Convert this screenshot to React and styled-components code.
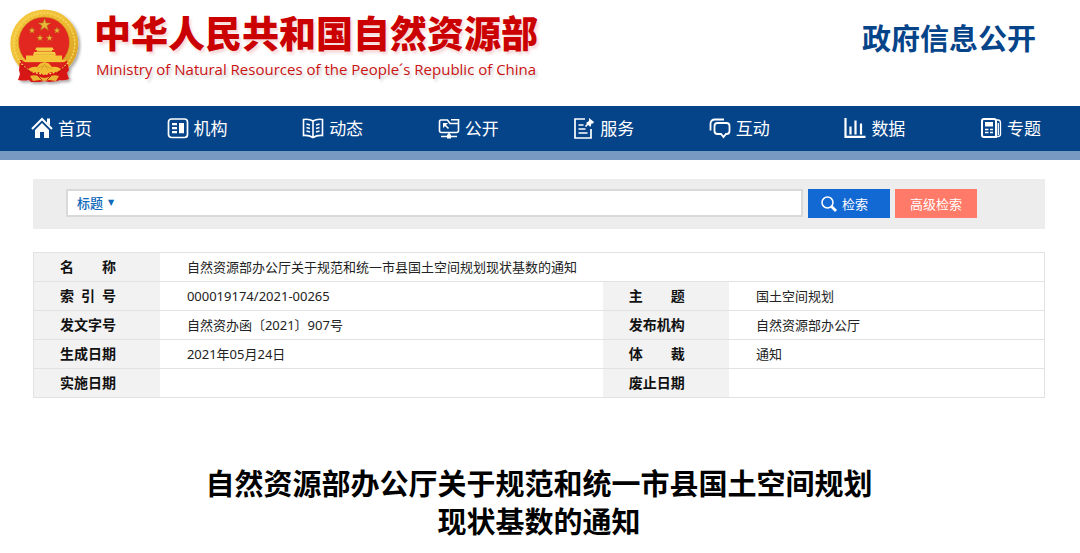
import React from 'react';
import styled, { createGlobalStyle } from 'styled-components';

const GlobalStyle = createGlobalStyle`
    *{
        box-sizing: border-box;
    }
    body{
        margin: 0;
        background: #fff;
        color: #222;
        font-family: "Noto Sans", "Noto Sans CJK SC", sans-serif;
        font-size: 13px;
    }
`;

const Header = styled.header`
    display: flex;
    justify-content: space-between;
    align-items: flex-start;
    height: 106px;
    padding: 8px 44px 0 8px;
`;

const Brand = styled.a`
    display: flex;
    text-decoration: none;

    svg{
        flex: none;
        margin-right: 12px;
    }
`;

const BrandName = styled.h1`
    margin: 0;
    color: #cb0000;
    font-family: "Noto Sans CJK SC", sans-serif;
    font-size: 37px;
    font-weight: 900;
    line-height: 48px;
    white-space: nowrap;
    text-shadow: 2px 3px 3px rgba(200, 0, 0, 0.15);
`;

const BrandSub = styled.p`
    margin: 3px 0 0 2px;
    color: #cb1212;
    font-family: "Open Sans", sans-serif;
    font-size: 15px;
    line-height: 20px;
    white-space: nowrap;
    text-shadow: 2px 3px 3px rgba(0, 0, 0, 0.2);
`;

const Section = styled.h2`
    margin: 9px 0 0;
    color: #06448a;
    font-family: "Noto Sans CJK SC", sans-serif;
    font-size: 29px;
    font-weight: 700;
    line-height: 40px;
    white-space: nowrap;
`;

const Nav = styled.nav`
    display: flex;
    justify-content: space-between;
    align-items: center;
    height: 54px;
    padding: 0 39px 2px 31px;
    background: #06448a;
    border-bottom: 9px solid #7799c2;
`;

const NavLink = styled.a`
    display: flex;
    align-items: center;
    gap: 5px;
    color: #fff;
    font-family: "Noto Sans CJK SC", sans-serif;
    font-size: 17px;
    line-height: 24px;
    text-decoration: none;
`;

const Main = styled.main`
    padding: 19px 35px 0 33px;
`;

const SearchBar = styled.form`
    display: flex;
    gap: 5px;
    padding: 10px 68px 11px 33px;
    background: #ededed;
`;

const SearchField = styled.div`
    display: flex;
    flex: 1;
    align-items: center;
    height: 28px;
    padding-left: 9px;
    background: #fff;
    border: 2px solid #d9d9d9;
`;

const Picker = styled.label`
    display: flex;
    align-items: center;
    gap: 4px;
    color: #1068ba;

    span{
        font-family: "DejaVu Sans", sans-serif;
        font-size: 8px;
        line-height: 12px;
    }
`;

const FieldSelect = styled.select`
    appearance: none;
    padding: 0;
    border: 0;
    background: transparent;
    color: inherit;
    font-family: "Noto Sans CJK SC", sans-serif;
    font-size: 13px;
    font-weight: 500;
    line-height: 20px;
`;

const Keyword = styled.input`
    flex: 1;
    min-width: 0;
    height: 22px;
    margin-left: 8px;
    border: 0;
    outline: 0;
    font: inherit;
`;

const Button = styled.button`
    display: flex;
    align-items: center;
    justify-content: center;
    gap: 5px;
    width: 82px;
    height: 29px;
    padding: 0;
    border: 0;
    background: ${({ $color }) => $color};
    color: #fff;
    font-family: "Noto Sans CJK SC", sans-serif;
    font-size: 13px;
`;

const SearchButton = styled(Button)`
    justify-content: flex-start;
    padding-left: 13px;
`;

const InfoTable = styled.table`
    width: 100%;
    margin-top: 23px;
    border: 1px solid #e2e2e2;
    border-collapse: collapse;
    table-layout: fixed;

    tr{
        height: 29px;
        border-bottom: 1px solid #e2e2e2;
    }
`;

const Label = styled.th`
    padding: 0 0 0 26px;
    background: #f2f2f2;
    color: #111;
    font-size: 14px;
    font-weight: 700;
    line-height: 20px;
    text-align: left;
    white-space: pre;
`;

const Value = styled.td`
    padding: 0 0 0 27px;
    line-height: 20px;
`;

const Title = styled.h2`
    max-width: 680px;
    margin: 65px auto 0;
    color: #000;
    font-family: "Noto Sans CJK SC", sans-serif;
    font-size: 29px;
    font-weight: 700;
    line-height: 38px;
    text-align: center;
`;

const Star = ({ x, y, r }) => (
    <path
        transform={`translate(${x} ${y}) scale(${r})`}
        d="M0-1 .24-.31 .95-.31 .38 .12 .59 .81 0 .4-.59 .81-.38 .12-.95-.31-.24-.31Z"
        fill="#e8b838"
        stroke="#a8741c"
        strokeWidth=".08"
    />
);

const Emblem = () => (
    <svg width="74" height="80" viewBox="0 0 74 80" aria-hidden="true">
        <defs>
            <linearGradient id="gold" x1="0" y1="0" x2="1" y2="1">
                <stop offset="0" stopColor="#f7cc43" />
                <stop offset=".5" stopColor="#edbd33" />
                <stop offset="1" stopColor="#d79a1e" />
            </linearGradient>
            <filter id="shade" x="-20%" y="-20%" width="150%" height="150%">
                <feDropShadow dx="2" dy="2" stdDeviation="1.5" floodOpacity=".35" />
            </filter>
        </defs>
        <g filter="url(#shade)">
            <circle cx="36.3" cy="35.5" r="34" fill="url(#gold)" />
            <path d="M12 52 11 62l1 4-2 6q6 1 11 0l2 2 9 0 4-1 5 1 9-1 1-1q5 1 10-1l-2-6 2-3-2-10Z" fill="#d71818" />
        </g>
        <circle cx="36.3" cy="35.5" r="30.500" fill="none" stroke="#f7d65c" strokeWidth="1.500" strokeDasharray="2 1.400" />
        <circle cx="36.3" cy="35.5" r="28" fill="none" stroke="#dba62a" strokeWidth=".8" strokeDasharray="1.500 3" />
        <circle cx="36" cy="34.500" r="25.600" fill="#e12720" stroke="#d49b22" strokeWidth=".8" />
        <Star x={36.500} y={17} r={6.500} />
        <Star x={24} y={22.500} r={3.400} />
        <Star x={49} y={22.500} r={3.400} />
        <Star x={32} y={30} r={3.400} />
        <Star x={41.500} y={30} r={3.400} />
        <path d="M28.500 39.500h16l1.500 2.500H27ZM29 42h15v1.500H29ZM26 44h21l1 3.500h-1V50H26v-2.500h-1Z" fill="#f6cc45" />
        <path d="M28 43.300h17M27 46.500h19" stroke="#dd9a28" strokeWidth=".5" />
        <path d="M18 47.500h36V52H18ZM14 52h45l-3 2.200H17Z" fill="#f4c53a" />
        <path d="M14 54.500h45l-8 9H22Z" fill="#dc201b" />
        <path d="M20 61q5-3 9-2l3-3.500 4.500-1.500 4.500 1.500 3 3.500q5-1 9 2-4 4-10 3l-6.500 3-6.500-3q-6 1-10-3Z" fill="#f2bd32" />
        <path d="M29 61q7-6 15 0M33 62l3.500-6 3.500 6" fill="none" stroke="#d89c28" strokeWidth=".8" />
        <path d="M14 57 24 66M59 57 49 66" stroke="#b30d12" />
        <path d="M22 68q6-2 10 1l4.500 1 4.500-1q4-3 10-1l-3 5-7-1-4.500 1-4.500-1-7 1Z" fill="#e8b431" />
        <path d="M30 68l4 4M43 68l-4 4" stroke="#cc2418" />
    </svg>
);

const icons = {
    home: (
        <>
            <path d="M1 12 11 2l10 10" fill="none" stroke="#fff" strokeWidth="2" />
            <path d="M16 1.500h3v7l-3-3Z" fill="#fff" />
            <path d="M4 13 11 6l7 7v8h-5v-6H9v6H4Z" fill="#fff" />
        </>
    ),
    organ: (
        <>
            <rect x="1.500" y="2" width="19" height="18.500" rx="3" fill="none" stroke="#fff" strokeWidth="1.700" />
            <path d="M5 6h5v2.200H5ZM5 10h5v2.200H5ZM5 14h5v2.200H5ZM12 6h5v10.200h-5Z" fill="#fff" />
        </>
    ),
    book: (
        <g fill="none" stroke="#fff" strokeWidth="1.600">
            <path d="M11 4Q7 1.500 1.500 2.500v16Q7 18 11 20.500 15 18 20.500 18.500v-16Q15 1.500 11 4Zm0 0v16" />
            <path d="m4.500 7 3.500 1M4.500 10.500l3.500 1M4.500 14l3.500 1M17.500 7 14 8M17.500 10.500l-3.500 1M17.500 14 14 15" />
        </g>
    ),
    open: (
        <g fill="none" stroke="#fff" strokeWidth="1.600">
            <path d="M9.500 3H3Q1.500 3 1.500 5v8.500q0 2 2 2h15q2 0 2-2V6.500H12L9.500 3Z" />
            <path d="M13 2.800h7.500V6M10.500 11.500l-4-4M11 15.500v3M3 19.500h16" />
            <path d="M5 6h5l-5 5ZM9 17.500h4V21.500H9Z" fill="#fff" stroke="none" />
        </g>
    ),
    service: (
        <g fill="none" stroke="#fff" strokeWidth="1.700">
            <path d="M12 2H2v19h16V12" />
            <path d="M5.500 8h5M5.500 12h7M5.500 16h9" />
            <path d="m12.500 9.500 4-4" />
            <path d="m16 1 5 4-1 1.500-1.500 0-1 3.500-4.500-4L16 4Z" fill="#fff" stroke="none" />
        </g>
    ),
    chat: (
        <g fill="none" stroke="#fff" strokeWidth="1.800">
            <path d="M1.500 13.500V7Q1.500 2.500 6 2.500h9" />
            <path d="M8.500 6h9q3 0 3 3v5q0 3-3 3H17L14.500 20 12 17H8.500q-3 0-3-3V9q0-3 3-3Z" />
        </g>
    ),
    data: (
        <path d="M1.500 1v18.800H21.500M6.500 9.500v8M11.500 3.500v14M17 6.500v11" fill="none" stroke="#fff" strokeWidth="2.200" />
    ),
    news: (
        <g fill="none" stroke="#fff" strokeWidth="2">
            <path d="M4 2h10q2 0 2 2v16H4q-2 0-2-2V4q0-2 2-2Z" />
            <path d="M16 3h2q2.500 0 2.500 3v11q0 2.500-2.500 2.500h-2M18.300 6v12" strokeWidth="1.300" />
            <path d="M5 5h8v4.500H5Z" fill="#fff" stroke="none" />
            <path d="M5 12.500h3.500M10 12.500h3M5 15.500h3.500M10 15.500h3" strokeWidth="1.300" />
        </g>
    ),
};

const menu = [
    ['home', '首页'],
    ['organ', '机构'],
    ['book', '动态'],
    ['open', '公开'],
    ['service', '服务'],
    ['chat', '互动'],
    ['data', '数据'],
    ['news', '专题'],
];

const rows = [
    ['索\u2002引\u2002号', '000019174/2021-00265', '主　　题', '国土空间规划'],
    ['发文字号', '自然资办函〔2021〕907号', '发布机构', '自然资源部办公厅'],
    ['生成日期', '2021年05月24日', '体　　裁', '通知'],
    ['实施日期', '', '废止日期', ''],
];

const App = () => {
    return (
        <>
            <GlobalStyle />
            <Header>
                <Brand href="#">
                    <Emblem />
                    <div>
                        <BrandName>中华人民共和国自然资源部</BrandName>
                        <BrandSub>Ministry of Natural Resources of the People´s Republic of China</BrandSub>
                    </div>
                </Brand>
                <Section>政府信息公开</Section>
            </Header>
            <Nav>
                {menu.map(([icon, text]) => (
                    <NavLink href="#" key={icon}>
                        <svg width="22" height="22" viewBox="0 0 22 22" aria-hidden="true">{icons[icon]}</svg>
                        {text}
                    </NavLink>
                ))}
            </Nav>
            <Main>
                <SearchBar onSubmit={(e) => e.preventDefault()}>
                    <SearchField>
                        <Picker>
                            <FieldSelect aria-label="标题">
                                <option>标题</option>
                            </FieldSelect>
                            <span aria-hidden="true">▼</span>
                        </Picker>
                        <Keyword type="text" aria-label="检索" />
                    </SearchField>
                    <SearchButton type="submit" $color="#1369d3">
                        <svg width="16" height="16" viewBox="0 0 16 16" fill="none" stroke="#fff" aria-hidden="true">
                            <circle cx="6.500" cy="6.500" r="5.500" strokeWidth="1.500" />
                            <path d="m10.500 10.500 4.500 4.500" strokeWidth="2.800" />
                        </svg>
                        检索
                    </SearchButton>
                    <Button type="button" $color="#ff7a68">高级检索</Button>
                </SearchBar>
                {/* datos del documento */}
                <InfoTable>
                    <colgroup>
                        <col style={{ width: '12.5%' }} />
                        <col />
                        <col style={{ width: '12.5%' }} />
                        <col style={{ width: '31.2%' }} />
                    </colgroup>
                    <tbody>
                        <tr>
                            <Label scope="row">名　　称</Label>
                            <Value colSpan={3}>自然资源部办公厅关于规范和统一市县国土空间规划现状基数的通知</Value>
                        </tr>
                        {rows.map(([a, b, c, d]) => (
                            <tr key={a}>
                                <Label scope="row">{a}</Label>
                                <Value>{b}</Value>
                                <Label scope="row">{c}</Label>
                                <Value>{d}</Value>
                            </tr>
                        ))}
                    </tbody>
                </InfoTable>
                <Title>自然资源部办公厅关于规范和统一市县国土空间规划<br />现状基数的通知</Title>
            </Main>
        </>
    );
};

export default App;
